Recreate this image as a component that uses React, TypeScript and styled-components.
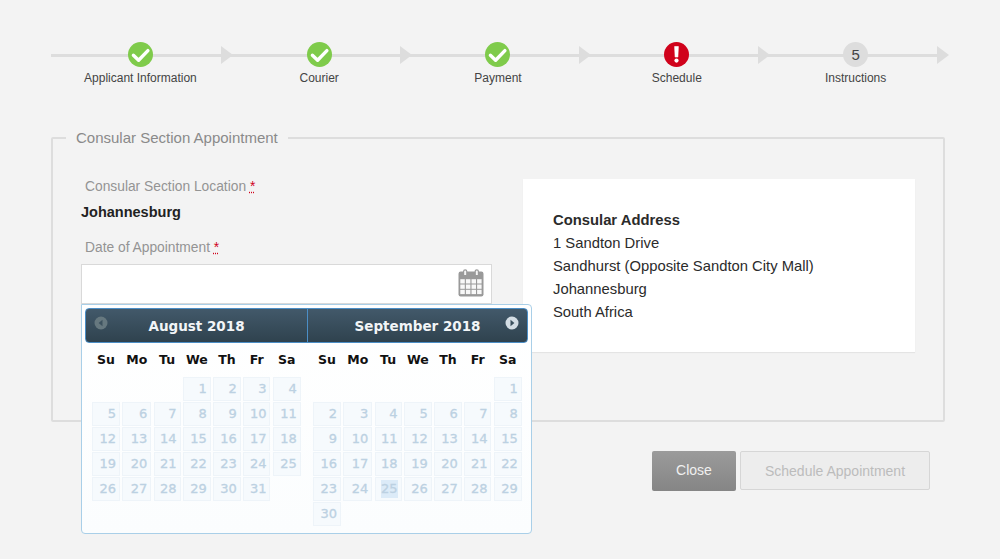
import styled, { createGlobalStyle } from "styled-components";

const GlobalStyle = createGlobalStyle`
  html, body {
    margin: 0;
    padding: 0;
    background-color: #f3f3f3;
    font-family: "Liberation Sans", Arial, sans-serif;
    overflow: hidden;
  }
`;

const WEEKDAYS = ["Su", "Mo", "Tu", "We", "Th", "Fr", "Sa"];

type StepState = "done" | "error" | "pending";

const STEPS: { label: string; state: StepState; num?: number }[] = [
  { label: "Applicant Information", state: "done" },
  { label: "Courier", state: "done" },
  { label: "Payment", state: "done" },
  { label: "Schedule", state: "error" },
  { label: "Instructions", state: "pending", num: 5 },
];

function StepIcon({ state, num }: { state: StepState; num?: number }) {
  if (state === "done") {
    return (
      <Circle $bg="#7fcb4b">
        <svg width="25" height="25" viewBox="0 0 25 25">
          <path d="M5.4 13.2l5.2 5L19.9 8.6" fill="none" stroke="#fff" strokeWidth="3.4" strokeLinecap="round" strokeLinejoin="round" />
        </svg>
      </Circle>
    );
  }
  if (state === "error") {
    return (
      <Circle $bg="#d0021b">
        <svg width="25" height="25" viewBox="0 0 25 25">
          <path d="M10.6 4.5h3.8l-.5 10.5h-2.8z" fill="#fff" stroke="#fff" strokeWidth="0.6" strokeLinejoin="round" />
          <circle cx="12.5" cy="18.6" r="2.1" fill="#fff" />
        </svg>
      </Circle>
    );
  }
  return <Circle $bg="#dddddd">{num}</Circle>;
}

function CalendarIcon() {
  const cells = [];
  for (let r = 0; r < 3; r++) {
    for (let c = 0; c < 4; c++) {
      cells.push(<rect key={`${r}-${c}`} x={2.3 + c * 5.6} y={10.2 + r * 5.3} width="4.5" height="4.3" fill="#f8f8f8" />);
    }
  }
  return (
    <svg width="26" height="28" viewBox="0 0 26 28">
      <rect x="0.5" y="2.5" width="25" height="25" rx="2.2" fill="#999999" />
      <path d="M5.6 6V2.4a1.6 1.6 0 0 1 3.2 0V6" fill="#f4f4f4" stroke="#999999" strokeWidth="1.2" />
      <path d="M17.2 6V2.4a1.6 1.6 0 0 1 3.2 0V6" fill="#f4f4f4" stroke="#999999" strokeWidth="1.2" />
      {cells}
    </svg>
  );
}

function NavIcon({ dir }: { dir: "prev" | "next" }) {
  const isNext = dir === "next";
  return (
    <svg width="14" height="14" viewBox="0 0 14 14">
      <circle cx="7" cy="7" r="6.5" fill={isNext ? "#d3dde4" : "#66787f"} />
      <path d={isNext ? "M5.5 3.8L9.4 7l-3.9 3.2z" : "M8.5 3.8L4.6 7l3.9 3.2z"} fill={isNext ? "#3a4f5c" : "#3d525f"} />
    </svg>
  );
}

function Month({ offset, total, today }: { offset: number; total: number; today?: number }) {
  const days = Array.from({ length: total }, (_, i) => i + 1);
  return (
    <MonthBox>
      <DayGrid>
        {WEEKDAYS.map((d) => (
          <WeekDay key={d}>{d}</WeekDay>
        ))}
        {Array.from({ length: offset }, (_, i) => (
          <span key={`e${i}`} />
        ))}
        {days.map((d) => (
          <Day key={d}>
            {d === today ? <Today>{d}</Today> : d}
          </Day>
        ))}
      </DayGrid>
    </MonthBox>
  );
}

export default function App() {
  return (
    <Page>
      <GlobalStyle />
      <Stepper>
        {STEPS.map((s) => (
          <Step key={s.label}>
            <StepIcon state={s.state} num={s.num} />
            <StepLabel>{s.label}</StepLabel>
          </Step>
        ))}
      </Stepper>

      <Section>
        <SectionLegend>Consular Section Appointment</SectionLegend>
        <SectionBody>
          <FormColumn>
            <FieldLabel>
              Consular Section Location <Required>*</Required>
            </FieldLabel>
            <FieldValue>Johannesburg</FieldValue>
            <FieldLabel>
              Date of Appointment <Required>*</Required>
            </FieldLabel>
            <DateField>
              <DateInput type="text" />
              <DateIcon>
                <CalendarIcon />
              </DateIcon>
              <Popup>
                <PopupHeader>
                  <HeaderMonth>
                    <NavButton $side="left">
                      <NavIcon dir="prev" />
                    </NavButton>
                    August 2018
                  </HeaderMonth>
                  <HeaderMonth $divider>
                    September 2018
                    <NavButton $side="right">
                      <NavIcon dir="next" />
                    </NavButton>
                  </HeaderMonth>
                </PopupHeader>
                <Months>
                  <Month offset={3} total={31} />
                  <Month offset={6} total={30} today={25} />
                </Months>
              </Popup>
            </DateField>
          </FormColumn>
          <AddressCard>
            <strong>Consular Address</strong>
            <br />
            1 Sandton Drive
            <br />
            Sandhurst (Opposite Sandton City Mall)
            <br />
            Johannesburg
            <br />
            South Africa
          </AddressCard>
        </SectionBody>
      </Section>

      <Actions>
        <CloseButton>Close</CloseButton>
        <ScheduleButton disabled>Schedule Appointment</ScheduleButton>
      </Actions>
    </Page>
  );
}

const Page = styled.div`
  box-sizing: border-box;
  width: 1000px;
  height: 559px;
  padding: 42px 55px 0 51px;
  background-color: #f3f3f3;
`;

const Stepper = styled.div`
  display: grid;
  grid-template-columns: repeat(5, 1fr);
  height: 86px;
`;

const Step = styled.div`
  position: relative;
  display: flex;
  flex-direction: column;
  align-items: center;

  &::before {
    content: "";
    position: absolute;
    top: 12px;
    left: 0;
    right: 0;
    height: 3px;
    background-color: #dddddd;
  }

  &::after {
    content: "";
    position: absolute;
    top: 4px;
    right: -3.5px;
    border-style: solid;
    border-width: 9.5px 0 9.5px 12px;
    border-color: transparent transparent transparent #dddddd;
  }
`;

const Circle = styled.div<{ $bg: string }>`
  position: relative;
  z-index: 1;
  width: 25px;
  height: 25px;
  border-radius: 50%;
  background-color: ${(p) => p.$bg};
  color: #444444;
  font-size: 15px;
  line-height: 25px;
  text-align: center;

  svg {
    display: block;
  }
`;

const StepLabel = styled.div`
  margin-top: 4px;
  font-size: 12px;
  line-height: 14px;
  color: #444444;
  white-space: nowrap;
`;

const Section = styled.fieldset`
  box-sizing: border-box;
  width: 894px;
  height: 294px;
  margin: 0;
  padding: 31px 0 0 0;
  border: 2px solid #dddddd;
  border-radius: 2px;
  min-inline-size: 0;
`;

const SectionLegend = styled.legend`
  margin-left: 13px;
  padding: 0 10px;
  font-size: 15px;
  line-height: 20px;
  color: #8a8a8a;
`;

const SectionBody = styled.div`
  display: flex;
  align-items: flex-start;
  gap: 31px;
  padding: 0 28px;
`;

const FormColumn = styled.div`
  width: 411px;
  flex: none;
`;

const FieldLabel = styled.div`
  padding: 1px 0 0 4px;
  font-size: 13.8px;
  line-height: 14px;
  color: #949494;
`;

const Required = styled.abbr`
  color: #d0021b;
  text-decoration: underline dotted;
`;

const FieldValue = styled.div`
  margin: 9px 0 19px;
  font-size: 14.5px;
  font-weight: bold;
  line-height: 18px;
  color: #222222;
`;

const DateField = styled.div`
  position: relative;
  margin-top: 9px;
`;

const DateInput = styled.input`
  display: block;
  box-sizing: border-box;
  width: 100%;
  height: 40px;
  border: 1px solid #d9d9d9;
  background-color: #ffffff;
  outline: none;
`;

const DateIcon = styled.div`
  position: absolute;
  top: 5px;
  right: 8px;

  svg {
    display: block;
  }
`;

const Popup = styled.div`
  position: absolute;
  z-index: 5;
  top: 40px;
  left: 0;
  box-sizing: border-box;
  width: 451px;
  height: 230px;
  padding: 3px;
  border: 1px solid #a9cfe8;
  border-radius: 0 4px 4px 4px;
  background: linear-gradient(to bottom, #ffffff, #fbfdfe);
  font-family: "DejaVu Sans", Verdana, sans-serif;
`;

const PopupHeader = styled.div`
  display: grid;
  grid-template-columns: 221px 1fr;
  box-sizing: border-box;
  height: 35px;
  border: 1px solid #4b8ec6;
  border-radius: 4px;
  background: linear-gradient(to bottom, #42596a, #2f424e);
  color: #f2f5f7;
`;

const HeaderMonth = styled.div<{ $divider?: boolean }>`
  position: relative;
  display: flex;
  align-items: center;
  justify-content: center;
  font-size: 13.5px;
  font-weight: bold;
  border-left: ${(p) => (p.$divider ? "1px solid #4b8ec6" : "none")};
`;

const NavButton = styled.span<{ $side: "left" | "right" }>`
  position: absolute;
  top: 7px;
  ${(p) => p.$side}: 8px;

  svg {
    display: block;
  }
`;

const Months = styled.div`
  display: flex;
  gap: 12px;
  padding: 0 7px;
`;

const MonthBox = styled.div`
  width: 209px;
  flex: none;
`;

const DayGrid = styled.div`
  display: grid;
  grid-template-columns: 28px 29px 27px 28px 27.5px 27.5px 28px;
  grid-template-rows: 33px;
  grid-auto-rows: 24px;
  column-gap: 2.3px;
  row-gap: 1px;
`;

const WeekDay = styled.div`
  font-size: 12.5px;
  font-weight: bold;
  line-height: 33px;
  text-align: center;
  color: #111111;
`;

const Day = styled.div`
  box-sizing: border-box;
  padding-right: 3px;
  border: 1px solid #eef4f9;
  background-color: #f6fafd;
  font-size: 13px;
  -webkit-text-stroke: 0.3px #bcd1e2;
  line-height: 22px;
  text-align: right;
  color: #bcd1e2;
`;

const Today = styled.span`
  display: inline-block;
  background-color: #dcebf8;
  line-height: 18px;
`;

const AddressCard = styled.div`
  box-sizing: border-box;
  width: 392px;
  height: 173px;
  flex: none;
  padding: 30px;
  background-color: #ffffff;
  box-shadow: 0 1px 1px rgba(0, 0, 0, 0.06);
  font-size: 14.8px;
  line-height: 23px;
  color: #2b2b2b;
`;

const Actions = styled.div`
  display: flex;
  justify-content: flex-end;
  align-items: flex-start;
  gap: 4px;
  margin-top: 29px;
  padding-right: 15px;
`;

const CloseButton = styled.button`
  width: 84px;
  height: 40px;
  border: none;
  border-radius: 2px;
  background: linear-gradient(to bottom, #9b9b9b, #858585);
  color: #f0f0f0;
  font-family: inherit;
  font-size: 14px;
  line-height: 38px;
  padding: 0 0 2px;
`;

const ScheduleButton = styled.button`
  width: 190px;
  height: 39px;
  border: 1px solid #d6d6d6;
  border-radius: 2px;
  background-color: #ededed;
  color: #bcbcbc;
  font-family: inherit;
  font-size: 14px;
`;
